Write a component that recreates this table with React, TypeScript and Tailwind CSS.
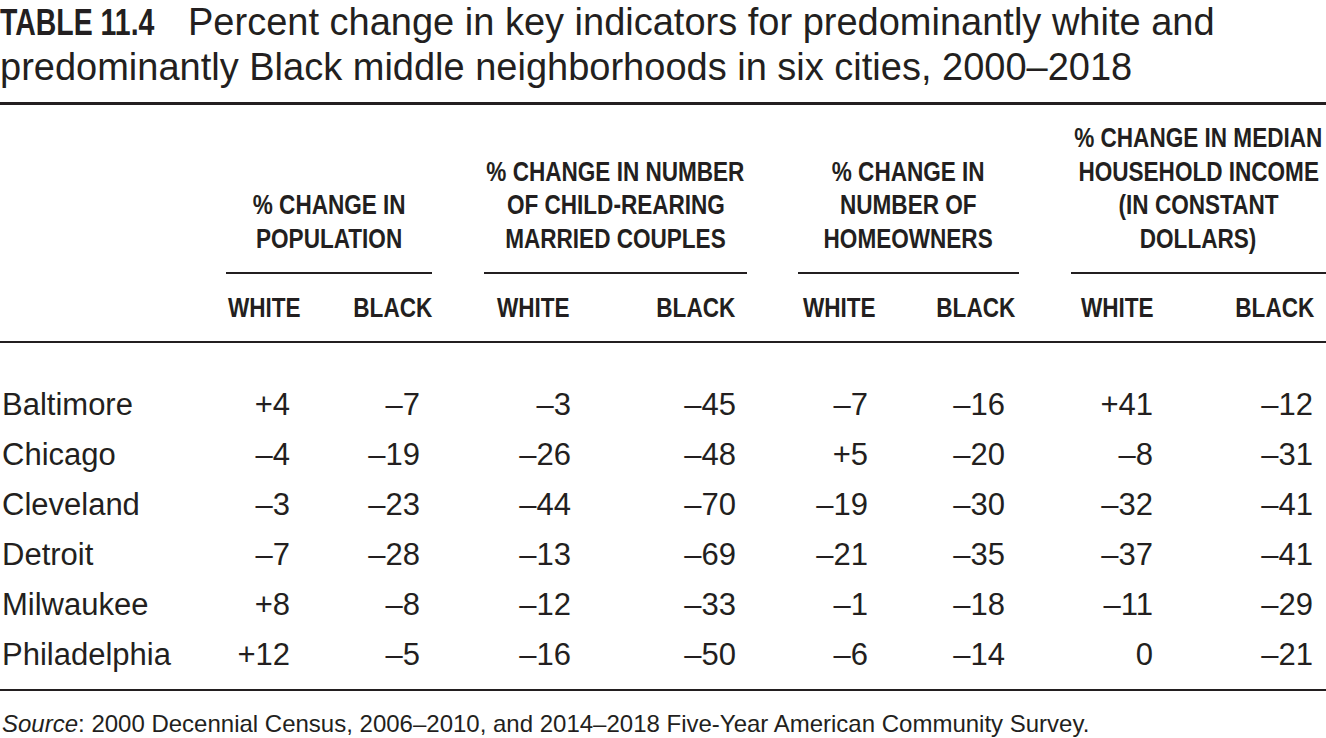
import React from "react";

const rows: [string, string[]][] = [
  ["Baltimore", ["+4", "–7", "–3", "–45", "–7", "–16", "+41", "–12"]],
  ["Chicago", ["–4", "–19", "–26", "–48", "+5", "–20", "–8", "–31"]],
  ["Cleveland", ["–3", "–23", "–44", "–70", "–19", "–30", "–32", "–41"]],
  ["Detroit", ["–7", "–28", "–13", "–69", "–21", "–35", "–37", "–41"]],
  ["Milwaukee", ["+8", "–8", "–12", "–33", "–1", "–18", "–11", "–29"]],
  ["Philadelphia", ["+12", "–5", "–16", "–50", "–6", "–14", "0", "–21"]],
];

function Group({ lines, w }: { lines: string[]; w: string }) {
  return (
    <div className={`${w} shrink-0 flex flex-col`}>
      <div className="font-bold text-[27.5px] leading-[33.5px] whitespace-nowrap">
        {lines.map((l) => (
          <div key={l} className="flex justify-center">
            <span className="shrink-0 inline-block scale-x-[0.82] origin-center">{l}</span>
          </div>
        ))}
      </div>
      <div className="mt-[17px] h-[2px] bg-[#231f20]" />
    </div>
  );
}

function Sub({ t }: { t: string }) {
  return (
    <div className="flex justify-end whitespace-nowrap">
      <span className="shrink-0 inline-block scale-x-[0.82] origin-right">{t}</span>
    </div>
  );
}

export default function App() {
  return (
    <div className="w-[1326px] h-[738px] bg-white text-[#231f20] font-['Liberation_Sans',Arial,sans-serif] overflow-hidden">
      <div className="text-[38px] leading-[44px] whitespace-nowrap">
        <div className="flex">
          <span className="w-[188px] shrink-0">
            <span className="inline-block font-bold text-[36px] scale-x-[0.79] origin-left">TABLE 11.4</span>
          </span>
          <span>Percent change in key indicators for predominantly white and</span>
        </div>
        <div>predominantly Black middle neighborhoods in six cities, 2000–2018</div>
      </div>
      <div className="mt-[13px] h-[3px] bg-[#231f20]" />

      <div className="mt-[16px] flex items-end">
        <div className="w-[226px] shrink-0" />
        <Group w="w-[206px]" lines={["% CHANGE IN", "POPULATION"]} />
        <div className="w-[52px] shrink-0" />
        <Group w="w-[263px]" lines={["% CHANGE IN NUMBER", "OF CHILD-REARING", "MARRIED COUPLES"]} />
        <div className="w-[51px] shrink-0" />
        <Group w="w-[221px]" lines={["% CHANGE IN", "NUMBER OF", "HOMEOWNERS"]} />
        <div className="w-[52px] shrink-0" />
        <Group w="w-[255px]" lines={["% CHANGE IN MEDIAN", "HOUSEHOLD INCOME", "(IN CONSTANT", "DOLLARS)"]} />
      </div>

      <div className="mt-[17px] grid grid-cols-[226px_75px_131px_138px_165px_141px_139px_139px_160px] font-bold text-[27.5px] leading-[34px]">
        <div />
        <Sub t="WHITE" />
        <Sub t="BLACK" />
        <Sub t="WHITE" />
        <Sub t="BLACK" />
        <Sub t="WHITE" />
        <Sub t="BLACK" />
        <Sub t="WHITE" />
        <Sub t="BLACK" />
      </div>
      <div className="mt-[16px] h-[2px] bg-[#231f20]" />

      <div className="mt-[37px] grid grid-cols-[226px_64px_130px_151px_165px_132px_137px_148px_160px] text-[31px] leading-[50px]">
        {rows.map(([city, vals]) => (
          <React.Fragment key={city}>
            <div className="pl-[2px]">{city}</div>
            {vals.map((v, i) => (
              <div key={i} className="text-right">
                {v}
              </div>
            ))}
          </React.Fragment>
        ))}
      </div>
      <div className="mt-[9px] h-[2px] bg-[#231f20]" />

      <div className="mt-[18px] pl-[2px] text-[24px] leading-[30px] whitespace-nowrap">
        <span className="italic">Source</span>: 2000 Decennial Census, 2006–2010, and 2014–2018 Five-Year American Community Survey.
      </div>
    </div>
  );
}
